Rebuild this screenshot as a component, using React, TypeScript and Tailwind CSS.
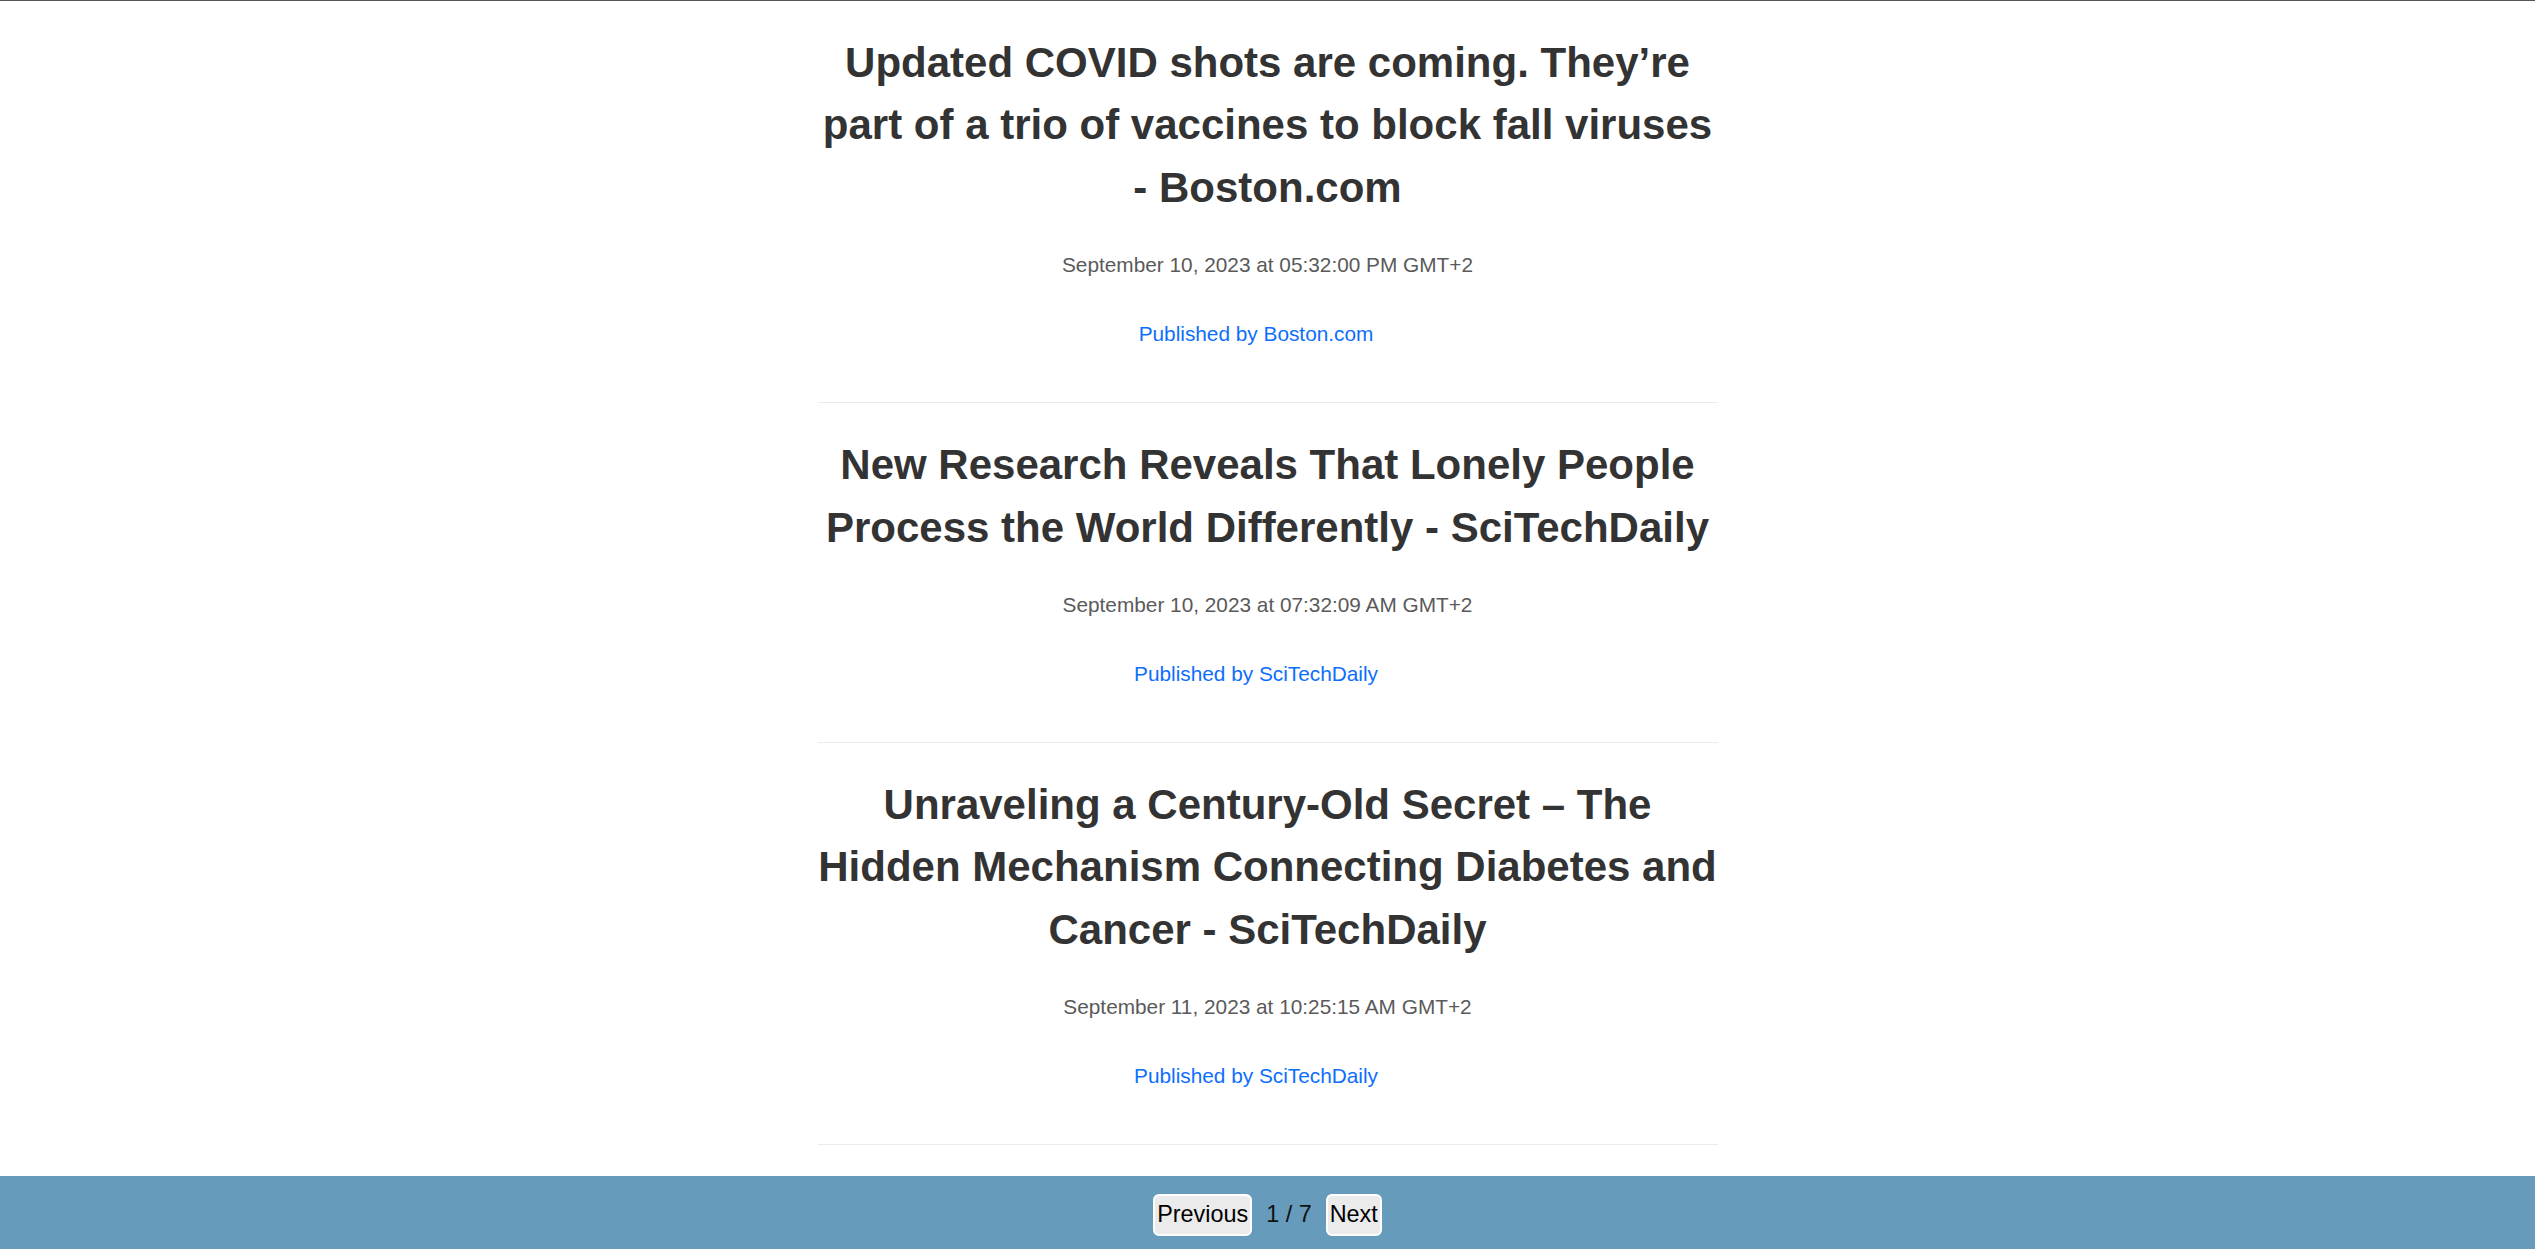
import React from "react";

const items = [
  {
    title: "Updated COVID shots are coming. They’re part of a trio of vaccines to block fall viruses - Boston.com",
    date: "September 10, 2023 at 05:32:00 PM GMT+2",
    source: "Boston.com",
  },
  {
    title: "New Research Reveals That Lonely People Process the World Differently - SciTechDaily",
    date: "September 10, 2023 at 07:32:09 AM GMT+2",
    source: "SciTechDaily",
  },
  {
    title: "Unraveling a Century-Old Secret – The Hidden Mechanism Connecting Diabetes and Cancer - SciTechDaily",
    date: "September 11, 2023 at 10:25:15 AM GMT+2",
    source: "SciTechDaily",
  },
];

export default function App() {
  return (
    <div className="h-screen flex flex-col bg-white border-t border-[#555555] font-['Liberation_Sans',Arial,sans-serif] overflow-hidden">
      <main className="flex-1">
        <div className="w-[900px] mx-auto">
          {items.map((it, i) => (
            <article key={i} className="text-center pt-[31px] pb-[56px] border-b border-[#ebebeb]">
              <h2 className="text-[42px] leading-[62.4px] font-bold text-[#333333]">{it.title}</h2>
              <p className="mt-[34px] text-[20.8px] leading-[24px] text-[#5a5a5a]">{it.date}</p>
              <p className="mt-[45px] pr-[23px] text-[20.8px] leading-[24px]">
                <a href="#" className="text-[#0d6efd]">Published by {it.source}</a>
              </p>
            </article>
          ))}
        </div>
      </main>
      <footer className="h-[73px] shrink-0 bg-[#669bbc] flex items-center justify-center pt-[5px]">
        <button className="h-[42px] px-[2px] border-2 border-white rounded-[6px] bg-[#ebebeb] text-black text-[23.4px] leading-none">
          Previous
        </button>
        <span className="mx-[14px] text-[23.4px] text-[#111111]">1 / 7</span>
        <button className="h-[42px] px-[2px] border-2 border-white rounded-[6px] bg-[#ebebeb] text-black text-[23.4px] leading-none">
          Next
        </button>
      </footer>
    </div>
  );
}
